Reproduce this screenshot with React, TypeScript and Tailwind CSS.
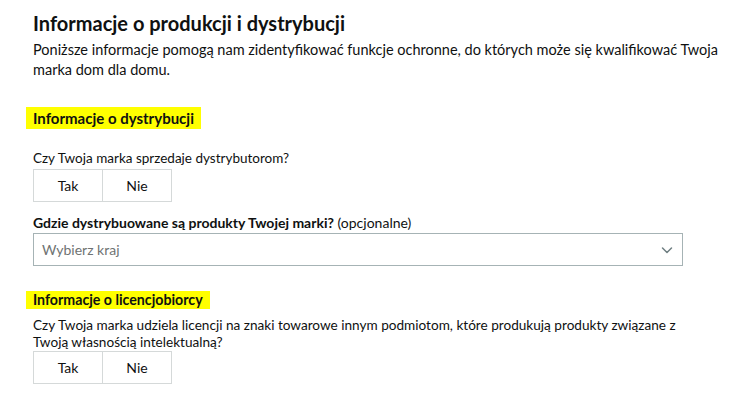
import { useState } from 'react'

const Toggle = () => {
  const [value, setValue] = useState<string | null>(null)
  return (
    <div className="flex w-[139px] h-[33px]">
      {['Tak', 'Nie'].map((label, i) => (
        <button
          key={label}
          onClick={() => setValue(label)}
          className={`flex-1 flex items-center justify-center border border-[#d5d9d9] text-[14px] text-[#0f1111] ${
            i === 1 ? 'border-l-0' : ''
          } ${value === label ? 'bg-[#f0f2f2]' : 'bg-white'}`}
        >
          {label}
        </button>
      ))}
    </div>
  )
}

export default function App() {
  return (
    <div className="min-h-[403px] bg-white text-[#0f1111] font-['Lato',sans-serif]">
      <div className="pl-[33px] w-[713px] pt-[10px]">
        {/* Header */}
        <h1 className="text-[20px] leading-[26px] font-bold">Informacje o produkcji i dystrybucji</h1>
        <p className="mt-[4px] text-[14.5px] leading-[20px] whitespace-nowrap">
          Poniższe informacje pomogą nam zidentyfikować funkcje ochronne, do których może się kwalifikować Twoja
          <br />
          marka dom dla domu.
        </p>

        {/* Distribution */}
        <div className="mt-[26px] -ml-[7px]">
          <span className="inline-block bg-[#ffff00] px-[7px] h-[22px] leading-[22px] text-[15px] font-bold">
            Informacje o dystrybucji
          </span>
        </div>
        <p className="mt-[18px] text-[13.5px] leading-[20px]">Czy Twoja marka sprzedaje dystrybutorom?</p>
        <div className="mt-[1px]">
          <Toggle />
        </div>

        <p className="mt-[11px] text-[14px] leading-[20px]">
          <span className="font-bold">Gdzie dystrybuowane są produkty Twojej marki?</span> (opcjonalne)
        </p>
        <div className="w-[650px] h-[33px] border border-[#a6b3b5] flex items-center justify-between pl-[8px] pr-[8px]">
          <span className="text-[14px] text-[#6f7373]">Wybierz kraj</span>
          <svg width="14" height="14" viewBox="0 0 14 14" fill="none">
            <path d="M2.5 5l4.5 4.5L11.5 5" stroke="#6f7f82" strokeWidth="1.5" strokeLinecap="round" strokeLinejoin="round" />
          </svg>
        </div>

        {/* Licensing */}
        <div className="mt-[21px] -ml-[7px]">
          <span className="inline-block bg-[#ffff00] px-[7px] h-[18px] leading-[18px] text-[14.2px] font-bold">
            Informacje o licencjobiorcy
          </span>
        </div>
        <p className="mt-[6px] text-[13.6px] leading-[17px] whitespace-nowrap">
          Czy Twoja marka udziela licencji na znaki towarowe innym podmiotom, które produkują produkty związane z
          <br />
          Twoją własnością intelektualną?
        </p>
        <div className="mt-[0px]">
          <Toggle />
        </div>
      </div>
    </div>
  )
}
